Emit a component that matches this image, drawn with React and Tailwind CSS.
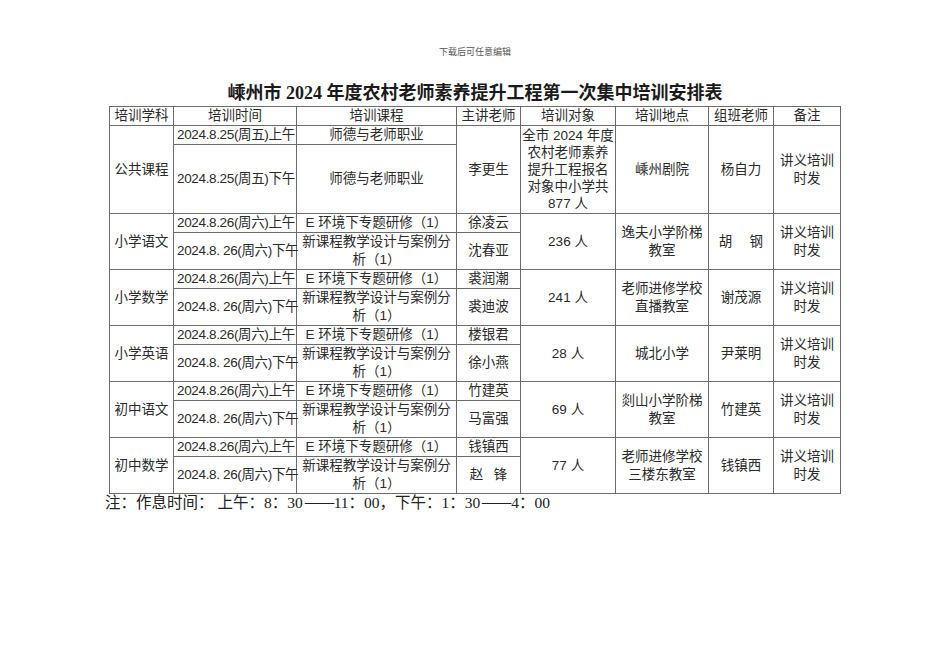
import React from "react";

const cell = "border border-[#6b6b6b] p-0 text-center align-middle leading-[18px]";
const dateCell = "border border-[#6b6b6b] p-0 pl-[3px] text-left align-middle leading-[18px] whitespace-nowrap tracking-[-0.35px]";

const blocks = [
  { subj: "小学语文", t1: "徐凌云", t2: "沈春亚", n: "236 人", place: ["逸夫小学阶梯", "教室"], org: "胡\u3000 钢" },
  { subj: "小学数学", t1: "裘润潮", t2: "裘迪波", n: "241 人", place: ["老师进修学校", "直播教室"], org: "谢茂源" },
  { subj: "小学英语", t1: "楼银君", t2: "徐小燕", n: "28 人", place: ["城北小学"], org: "尹莱明" },
  { subj: "初中语文", t1: "竹建英", t2: "马富强", n: "69 人", place: ["剡山小学阶梯", "教室"], org: "竹建英" },
  { subj: "初中数学", t1: "钱镇西", t2: "赵\u2002 锋", n: "77 人", place: ["老师进修学校", "三楼东教室"], org: "钱镇西" },
];

function Lines({ items }) {
  return (
    <>
      {items.map((t, i) => (
        <React.Fragment key={i}>
          {i > 0 && <br />}
          {t}
        </React.Fragment>
      ))}
    </>
  );
}

function Dash() {
  return (
    <span className="inline-block w-[31px] pl-[1px] whitespace-nowrap" style={{ fontFamily: '"Noto Sans CJK SC", sans-serif' }}>
      <span className="inline-block origin-left scale-x-[1.2]">——</span>
    </span>
  );
}

export default function App() {
  return (
    <div className="w-[950px] h-[672px] bg-white text-[#2a2a2a] flex flex-col items-center" style={{ fontFamily: '"Liberation Sans", "Noto Sans CJK SC", sans-serif' }}>
      <div className="mt-[46px] text-[9px] leading-[12px] text-[#555]" style={{ fontFamily: '"Liberation Serif", "Noto Sans CJK SC", serif' }}>
        下载后可任意编辑
      </div>
      <div className="mt-[23px] text-[18px] leading-[24px] font-bold text-[#1a1a1a]" style={{ fontFamily: '"Liberation Serif", "Noto Sans CJK SC", serif' }}>
        嵊州市 2024 年度农村老师素养提升工程第一次集中培训安排表
      </div>
      <table className="mt-[1px] border-collapse table-fixed w-[731px] text-[13.5px]">
        <colgroup>
          <col className="w-[64px]" />
          <col className="w-[123px]" />
          <col className="w-[160px]" />
          <col className="w-[64px]" />
          <col className="w-[95px]" />
          <col className="w-[93px]" />
          <col className="w-[65px]" />
          <col className="w-[67px]" />
        </colgroup>
        <tbody>
          <tr className="h-[19px]">
            <td className={cell}>培训学科</td>
            <td className={cell}>培训时间</td>
            <td className={cell}>培训课程</td>
            <td className={cell}>主讲老师</td>
            <td className={cell}>培训对象</td>
            <td className={cell}>培训地点</td>
            <td className={cell}>组班老师</td>
            <td className={cell}>备注</td>
          </tr>
          <tr className="h-[19px]">
            <td className={cell} rowSpan={2}>公共课程</td>
            <td className={dateCell}>2024.8.25(周五)上午</td>
            <td className={cell}>师德与老师职业</td>
            <td className={cell} rowSpan={2}>李更生</td>
            <td className="border border-[#6b6b6b] p-0 text-center align-middle leading-[17px]" rowSpan={2}>
              <Lines items={["全市 2024 年度", "农村老师素养", "提升工程报名", "对象中小学共", "877 人"]} />
            </td>
            <td className={cell} rowSpan={2}>嵊州剧院</td>
            <td className={cell} rowSpan={2}>杨自力</td>
            <td className={cell} rowSpan={2}>
              <Lines items={["讲义培训", "时发"]} />
            </td>
          </tr>
          <tr className="h-[69px]">
            <td className={dateCell}>2024.8.25(周五)下午</td>
            <td className={cell}>师德与老师职业</td>
          </tr>
          {blocks.map((b) => (
            <React.Fragment key={b.subj}>
              <tr className="h-[19px]">
                <td className={cell} rowSpan={2}>{b.subj}</td>
                <td className={dateCell}>2024.8.26(周六)上午</td>
                <td className={cell}>E 环境下专题研修（1）</td>
                <td className={cell}>{b.t1}</td>
                <td className={cell} rowSpan={2}>{b.n}</td>
                <td className={cell} rowSpan={2}>
                  <Lines items={b.place} />
                </td>
                <td className={cell} rowSpan={2}>{b.org}</td>
                <td className={cell} rowSpan={2}>
                  <Lines items={["讲义培训", "时发"]} />
                </td>
              </tr>
              <tr className="h-[37px]">
                <td className={dateCell}>2024.8. 26(周六)下午</td>
                <td className={cell}>
                  <Lines items={["新课程教学设计与案例分", "析（1）"]} />
                </td>
                <td className={cell}>{b.t2}</td>
              </tr>
            </React.Fragment>
          ))}
        </tbody>
      </table>
      <div className="self-start ml-[105px] -mt-[2px] text-[15.5px] leading-[18px] text-[#222]" style={{ fontFamily: '"Liberation Serif", "Noto Sans CJK SC", serif' }}>
        注：作息时间： 上午：8：30<Dash />11：00，下午：1：30<Dash />4：00
      </div>
    </div>
  );
}
